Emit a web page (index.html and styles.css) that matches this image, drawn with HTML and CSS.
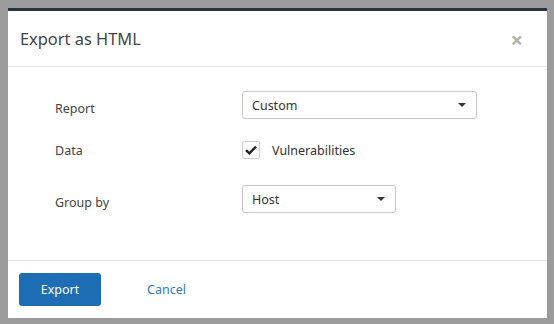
FILE: index.html
```html
<!DOCTYPE html>
<html lang="en">
<head>
  <meta charset="UTF-8" />
  <title>Export as HTML</title>
  <link rel="stylesheet" href="styles.css">
</head>
<body>
  <div class="modal">
    <div class="modal-header">
      <h1>Export as HTML</h1>
      <span class="close">&times;</span>
    </div>

    <div class="modal-body">
      <div class="row row-report">
        <label class="low">Report</label>
        <div class="select wide">
          <span>Custom</span>
          <span class="caret"></span>
        </div>
      </div>

      <div class="row row-data">
        <label>Data</label>
        <div class="check">
          <span class="box">
            <svg width="12" height="10" viewBox="0 0 12 10"><path d="M1 5.2 L4.4 8.4 L11 1.6" fill="none" stroke="#222" stroke-width="2.4"/></svg>
          </span>
          <span>Vulnerabilities</span>
        </div>
      </div>

      <div class="row">
        <label class="low">Group by</label>
        <div class="select narrow">
          <span>Host</span>
          <span class="caret"></span>
        </div>
      </div>
    </div>

    <div class="modal-footer">
      <button class="btn-primary">Export</button>
      <a class="link" href="#">Cancel</a>
    </div>
  </div>
</body>
</html>
```

FILE: styles.css
```css
body {
  margin: 0;
  background-color: #9b9b9b;
  font-family: 'Noto Sans', 'Open Sans', sans-serif;
  color: #444;
}

.modal {
  margin: 8px 7px 6px 8px;
  height: 310px;
  background: #fff;
  border-top: 3px solid #27343b;
  box-sizing: border-box;
  display: flex;
  flex-direction: column;
}

.modal-header {
  height: 55px;
  border-bottom: 1px solid #e8e8e8;
  display: flex;
  align-items: center;
  justify-content: space-between;
  padding: 0 24px 0 12px;
}

.modal-header h1 {
  margin: 0;
  font-size: 16.4px;
  font-weight: 400;
  color: #444;
}

.close {
  font-size: 22px;
  font-weight: 700;
  color: #b3b3b3;
  line-height: 1;
}

.modal-body {
  flex: 1;
  padding: 24px 0 0 47px;
  border-bottom: 1px solid #e8e8e8;
  font-size: 12.5px;
}

.row {
  display: flex;
  align-items: center;
  min-height: 28px;
  margin-bottom: 21px;
}

.row-report {
  margin-bottom: 17px;
}

.row label {
  width: 187px;
  flex-shrink: 0;
}

/* labels sit a little below the control's centre */
.row label.low {
  padding-top: 6px;
}

.select {
  height: 28px;
  box-sizing: border-box;
  border: 1px solid #c8c8c8;
  border-radius: 3px;
  display: flex;
  align-items: center;
  justify-content: space-between;
  padding: 0 10px 0 9px;
  color: #333;
}

.select.wide {
  width: 235px;
}

.select.narrow {
  width: 154px;
}

.caret {
  width: 0;
  height: 0;
  border-left: 4px solid transparent;
  border-right: 4px solid transparent;
  border-top: 4px solid #333;
}

.check {
  display: flex;
  align-items: center;
  gap: 12px;
  color: #333;
}

.box {
  width: 18px;
  height: 18px;
  box-sizing: border-box;
  border: 1px solid #cfcfcf;
  border-radius: 2px;
  display: flex;
  align-items: center;
  justify-content: center;
}

.modal-footer {
  height: 57px;
  padding: 12px 0 0 11px;
  box-sizing: border-box;
  display: flex;
  align-items: flex-start;
  font-size: 12.5px;
}

.btn-primary {
  width: 82px;
  height: 33px;
  border: none;
  border-radius: 3px;
  background-color: #1d6db5;
  color: #fff;
  font-family: inherit;
  font-size: 12.5px;
}

.link {
  margin: 8px 0 0 46px;
  color: #2d7bc4;
  text-decoration: none;
}
```
